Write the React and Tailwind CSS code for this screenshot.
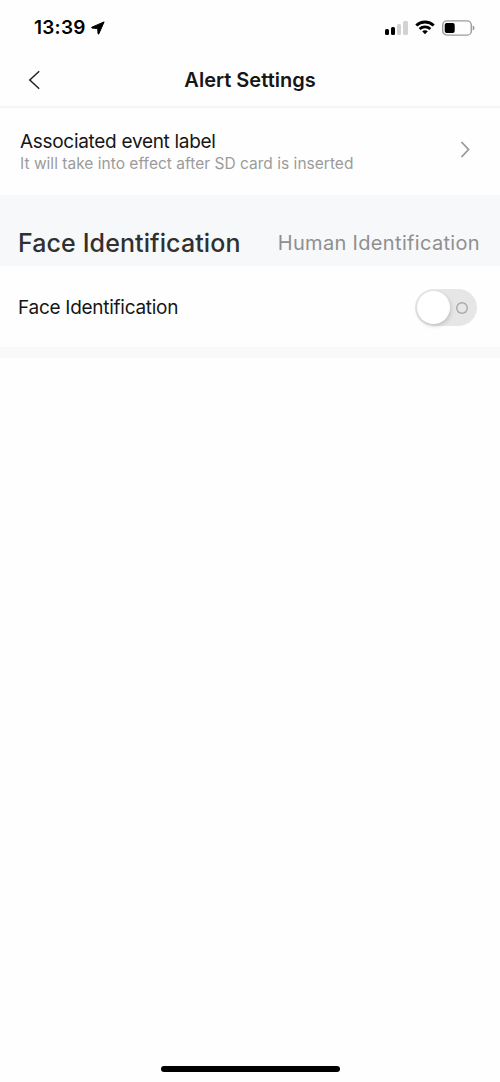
import React from 'react';

function LocationArrow() {
    return (
        <svg className="ml-[5px] h-[14px] w-[14px]" viewBox="0 0 14 14" fill="#000" stroke="#000" strokeWidth="1" strokeLinejoin="round">
            <path d="M13.1.9L7.9 12.8c-.2.4-.9.3-.9-.1L6.7 7.5 1 7.1c-.5-.1-.6-.7-.1-.9z" />
        </svg>
    );
}

function SignalBars() {
    return (
        <div className="flex h-[15px] items-end gap-[2px]">
            <span className="h-[6px] w-[4px] rounded-[1.5px] bg-black" />
            <span className="h-[8px] w-[4px] rounded-[1.5px] bg-black" />
            <span className="h-[11px] w-[4px] rounded-[1.5px] bg-[#d2d2d2]" />
            <span className="h-[14px] w-[5px] rounded-[1.5px] bg-[#d2d2d2]" />
        </div>
    );
}

function WifiIcon() {
    return (
        <svg className="ml-[7px] h-[15px] w-[20px]" viewBox="0 0 20 15" fill="none" stroke="#000">
            <path d="M1.3 5.5C6.1.9 13.9.9 18.7 5.5" strokeWidth="2.9" />
            <path d="M4.6 9C7.7 6.2 12.3 6.2 15.4 9" strokeWidth="2.7" />
            <path d="M7.2 11.3C8.8 10 11.2 10 12.8 11.3L10 14.2z" fill="#000" stroke="none" />
        </svg>
    );
}

function BatteryIcon() {
    return (
        <svg className="ml-[7px] h-[16px] w-[33px]" viewBox="0 0 33 16" fill="none">
            <rect x="0.7" y="0.9" width="28.6" height="14.2" rx="4.2" stroke="#9c9c9c" strokeWidth="1.4" />
            <rect x="2.7" y="2.9" width="10" height="10.2" rx="2" fill="#000" />
            <path d="M30.7 5.6c1.3.4 1.8 1.3 1.8 2.4s-.5 2-1.8 2.4z" fill="#999" />
        </svg>
    );
}

function StatusBar() {
    return (
        <div className="flex h-[53px] items-center justify-between pt-[2px] pr-[25px] pl-[34px]">
            <div className="flex items-center">
                <span className="pt-[2px] text-[19px] font-semibold tracking-[0.25px] text-black">13:39</span>
                <LocationArrow />
            </div>
            <div className="flex items-center">
                <SignalBars />
                <WifiIcon />
                <BatteryIcon />
            </div>
        </div>
    );
}

function NavBar() {
    return (
        <header className="grid h-[55px] grid-cols-[100px_1fr_100px] items-center border-b-2 border-[#f5f5f6]">
            <button aria-label="Back" className="pl-[28px]">
                <svg className="h-[20px] w-[13px]" viewBox="0 0 13 20" fill="none" stroke="#222" strokeWidth="1.5">
                    <path d="M11.2 1.2L1.8 10l9.4 8.8" />
                </svg>
            </button>
            <h1 className="text-center text-[20px] font-semibold whitespace-nowrap text-[#161616]">Alert Settings</h1>
        </header>
    );
}

function EventLabelRow() {
    return (
        <section className="flex h-[87px] items-center justify-between pr-[30px] pl-[20px]">
            <div>
                <p className="text-[19px] leading-[24px] tracking-[-0.3px] text-[#161616]">Associated event label</p>
                <p className="text-[15.5px] leading-[20px] tracking-[0.02px] text-[#9b9b9b]">
                    It will take into effect after SD card is inserted
                </p>
            </div>
            <svg className="mb-[4px] h-[17px] w-[10px]" viewBox="0 0 10 17" fill="none" stroke="#999" strokeWidth="1.8">
                <path d="M1.5 1l7 7.5-7 7.5" />
            </svg>
        </section>
    );
}

function DetectionTabs() {
    return (
        <nav className="flex h-[71px] items-center justify-between bg-[#f7f8fa] pt-[25px] pr-[20px] pl-[18px] whitespace-nowrap">
            <button className="pt-[2px] text-[25px] font-medium tracking-[0.1px] text-[#303030]">Face Identification</button>
            <button className="text-[20px] tracking-[0.33px] text-[#8f8f8f]">Human Identification</button>
        </nav>
    );
}

function Toggle() {
    return (
        <button
            role="switch"
            aria-checked="false"
            aria-label="Face Identification"
            className="flex h-[37px] w-[62px] items-center justify-between rounded-full bg-[#e6e6e7] pr-[9px] pl-[2px]"
        >
            <span className="h-[33px] w-[33px] rounded-full bg-white shadow-[1px_2px_4px_rgba(0,0,0,0.16)]" />
            <span className="mt-[1px] h-[12px] w-[12px] rounded-full shadow-[inset_0_0_0_1.4px_#aaa]" />
        </button>
    );
}

export default function App() {
    return (
        <div className="flex h-[1082px] w-[500px] flex-col overflow-hidden bg-[#fefefe] font-['Inter',sans-serif]">
            <StatusBar />
            <NavBar />
            <EventLabelRow />
            <DetectionTabs />
            <section className="flex h-[81px] items-center justify-between pt-[1px] pr-[23px] pl-[18px]">
                <span className="pt-[2px] text-[19px] tracking-[-0.27px] text-[#161616]">Face Identification</span>
                <Toggle />
            </section>
            <div className="h-[11px] bg-[#f9f9fa]" />

            {/* Home indicator */}
            <div className="mx-auto mt-auto mb-[10px] h-[6px] w-[179px] rounded-full bg-black" />
        </div>
    );
}
